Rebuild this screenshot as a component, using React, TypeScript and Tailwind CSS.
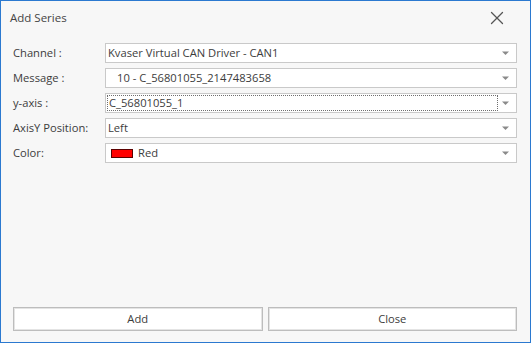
import { X } from "lucide-react";

const rows = [
  { label: "Channel :", value: "Kvaser Virtual CAN Driver - CAN1" },
  { label: "Message :", value: "10 - C_56801055_2147483658", indent: true },
  { label: "y-axis :", value: "C_56801055_1", focused: true },
  { label: "AxisY Position:", value: "Left" },
  { label: "Color:", value: "Red", swatch: true },
];

function Arrow() {
  return (
    <svg width="7" height="4" viewBox="0 0 7 4" className="shrink-0">
      <path d="M0 0.5h7L3.5 4z" fill="#8a8a8a" />
    </svg>
  );
}

function Combo({
  value,
  indent,
  focused,
  swatch,
}: {
  value: string;
  indent?: boolean;
  focused?: boolean;
  swatch?: boolean;
}) {
  return (
    <div className="flex h-5 flex-1 items-center border border-[#c9c9c9] bg-white pr-[4px]">
      <div
        className={
          focused
            ? "mx-[1px] flex h-[16px] flex-1 items-center border border-dotted border-[#6e6e6e] pl-[1px]"
            : "flex h-full flex-1 items-center pl-[2px]"
        }
      >
        {swatch && (
          <span className="ml-[3px] mr-[5px] h-[9px] w-[22px] border border-[#5a0000] bg-[#ff0000]" />
        )}
        <span className={indent ? "pl-[9px]" : ""}>{value}</span>
      </div>
      <div className="flex w-[13px] justify-center">
        <Arrow />
      </div>
    </div>
  );
}

export default function App() {
  return (
    <div
      className="flex h-[343px] w-[531px] flex-col border border-[#2b79d0] bg-[#f7f7f7] text-[11.2px] text-[#3c3c3c]"
      style={{ fontFamily: '"Open Sans", "Noto Sans", sans-serif' }}
    >
      <div className="flex h-[34px] items-center justify-between pl-[9px] pr-[22px]">
        <span className="text-[11.5px] text-[#444]">Add Series</span>
        <X size={22} strokeWidth={1.4} color="#555" />
      </div>
      <div className="flex flex-col gap-[5px] pl-[12px] pr-[13px] pt-[8px]">
        {rows.map((r) => (
          <div key={r.label} className="flex items-center">
            <div className="w-[92px] shrink-0">{r.label}</div>
            <Combo
              value={r.value}
              indent={r.indent}
              focused={r.focused}
              swatch={r.swatch}
            />
          </div>
        ))}
      </div>
      <div className="flex-1" />
      <div className="flex gap-[5px] pb-[11px] pl-[12px] pr-[13px]">
        <button className="h-[24px] flex-1 border border-[#bdbdbd] bg-white text-[#3c3c3c] shadow-[inset_0_0_0_1px_#e4e4e4]">
          Add
        </button>
        <button className="h-[24px] flex-1 border border-[#bdbdbd] bg-white text-[#3c3c3c] shadow-[inset_0_0_0_1px_#e4e4e4]">
          Close
        </button>
      </div>
    </div>
  );
}
